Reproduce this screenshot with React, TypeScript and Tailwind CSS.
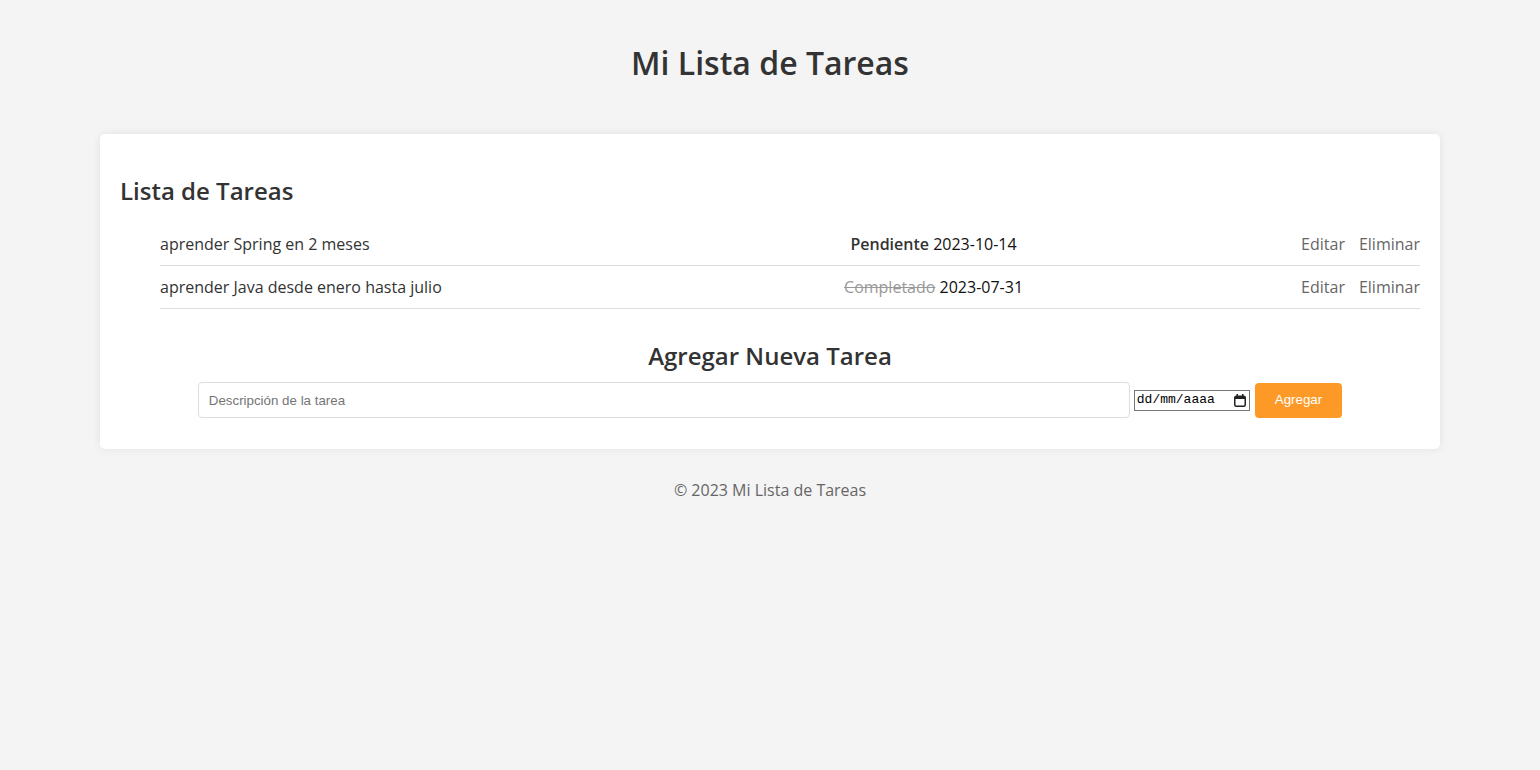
import React from "react";

type Task = {
  id: number;
  description: string;
  done: boolean;
  date: string;
};

const tasks: Task[] = [
  { id: 1, description: "aprender Spring en 2 meses", done: false, date: "2023-10-14" },
  { id: 2, description: "aprender Java desde enero hasta julio", done: true, date: "2023-07-31" },
];

function CalendarIcon() {
  return (
    <svg width="12" height="13" viewBox="0 0 12 13" className="text-[#222]">
      <rect x="0.75" y="2.25" width="10.5" height="10" rx="1.5" fill="none" stroke="currentColor" strokeWidth="1.5" />
      <rect x="1" y="2.5" width="10" height="2.5" fill="currentColor" />
      <rect x="2.5" y="0" width="1.5" height="3" fill="currentColor" />
      <rect x="8" y="0" width="1.5" height="3" fill="currentColor" />
    </svg>
  );
}

function TaskRow({ task }: { task: Task }) {
  return (
    <li className="grid grid-cols-[406px_1fr_auto] items-center border-b border-[#ddd] py-[10px] leading-[22px]">
      <span className="text-[#333]">{task.description}</span>
      <span className="text-center">
        {task.done ? (
          <span className="text-[#999] line-through">Completado</span>
        ) : (
          <span className="font-semibold text-[#333]">Pendiente</span>
        )}{" "}
        <span className="text-[#111]">{task.date}</span>
      </span>
      <span className="flex gap-[14px] text-[#666]">
        <button className="cursor-pointer">Editar</button>
        <button className="cursor-pointer">Eliminar</button>
      </span>
    </li>
  );
}

export default function App() {
  return (
    <div className="min-h-[770px] bg-[#f4f4f4] font-['Open_Sans',sans-serif] text-base text-[#333]">
      <header className="pt-[41px] text-center">
        <h1 className="text-[32px] font-semibold leading-[44px] text-[#333]">Mi Lista de Tareas</h1>
      </header>

      <main className="mx-[100px] mt-[49px] rounded-[5px] bg-white p-5 shadow-[0_0_8px_rgba(0,0,0,0.08)]">
        <h2 className="mt-5 text-2xl font-semibold leading-[33px]">Lista de Tareas</h2>
        <ul className="mt-4 pl-10">
          {tasks.map((t) => (
            <TaskRow key={t.id} task={t} />
          ))}
        </ul>

        <h2 className="mt-[30px] text-center text-2xl font-semibold leading-[33px]">Agregar Nueva Tarea</h2>
        <form className="mt-[10px] mb-[11px] flex items-center justify-center font-['Liberation_Sans',Arial,sans-serif] text-[13.33px]">
          <input
            type="text"
            placeholder="Descripción de la tarea"
            className="h-9 w-[932px] rounded-[4px] border border-[#ddd] px-[10px] text-[#333] outline-none placeholder:text-[#757575]"
          />
          <div className="ml-1 flex h-[21px] w-[116px] items-center justify-between border border-[#767676] pr-[3px] pl-[2px] font-['Liberation_Mono',monospace] text-[13px] text-black">
            <span>dd/mm/aaaa</span>
            <CalendarIcon />
          </div>
          <button
            type="button"
            className="ml-[5px] h-[35px] rounded-[4px] bg-[#fd9a27] px-5 text-white"
          >
            Agregar
          </button>
        </form>
      </main>

      <footer className="mt-[30px] text-center leading-[22px] text-[#666]">© 2023 Mi Lista de Tareas</footer>
    </div>
  );
}
